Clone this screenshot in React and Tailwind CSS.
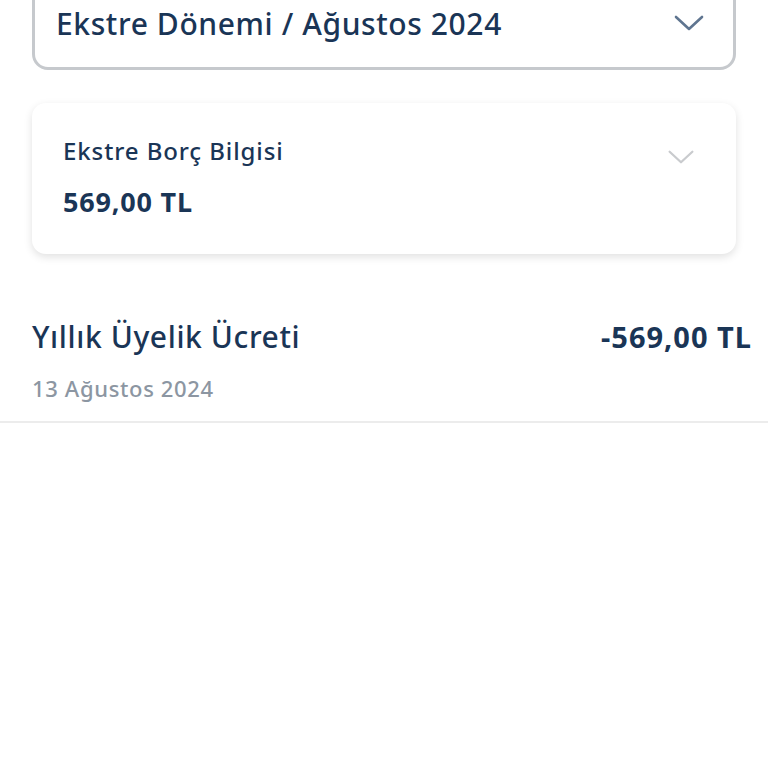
const font = { fontFamily: '"Noto Sans", "Open Sans", sans-serif' }

function Chevron({ className }) {
  return (
    <svg viewBox="0 0 30 16" className={className} fill="none" stroke="currentColor" strokeWidth="2.6" strokeLinecap="round" strokeLinejoin="round">
      <path d="M2 2 L15 14 L28 2" />
    </svg>
  )
}

export default function App() {
  return (
    <div className="w-[768px] h-[768px] bg-white overflow-hidden" style={font}>
      {/* Dönem seçici */}
      <div className="mx-[32px] -mt-[32px] h-[102px] border-[3px] border-[#c6c9cd] rounded-[16px] flex items-center justify-between pl-[21px] pr-[29px] pt-[8px]">
        <span className="text-[30px] font-medium tracking-[0.6px] text-[#1a3556]">Ekstre Dönemi / Ağustos 2024</span>
        <Chevron className="w-[30px] h-[16px] text-[#5f7590]" />
      </div>

      {/* Borç kartı */}
      <div className="mx-[32px] mt-[33px] h-[151px] bg-white rounded-[14px] shadow-[0_3px_8px_rgba(0,0,0,0.12)] px-[31px] pt-[32px] flex justify-between">
        <div>
          <div className="text-[24px] leading-[32px] font-medium tracking-[0.9px] text-[#1a3556]">Ekstre Borç Bilgisi</div>
          <div className="mt-[18px] text-[27px] leading-[34px] font-bold tracking-[0.8px] text-[#1a3556]">569,00 TL</div>
        </div>
        <Chevron className="w-[28px] h-[14px] mt-[15px] mr-[10px] text-[#c9cbce]" />
      </div>

      {/* Hareket satırı */}
      <div className="mt-[63px] pl-[32px] pr-[16px] pb-[18px] border-b-2 border-[#ececec]">
        <div className="flex justify-between items-center">
          <span className="text-[30px] leading-[40px] font-medium tracking-[0.6px] text-[#1a3556]">Yıllık Üyelik Ücreti</span>
          <span className="text-[29px] leading-[40px] font-bold tracking-[1px] text-[#1a3556]">-569,00 TL</span>
        </div>
        <div className="mt-[16px] text-[22px] leading-[30px] font-medium tracking-[0.65px] text-[#8c96a2]">13 Ağustos 2024</div>
      </div>
    </div>
  )
}
